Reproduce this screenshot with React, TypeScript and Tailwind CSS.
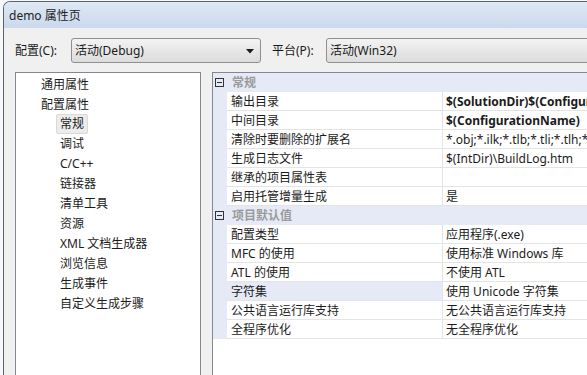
import React from "react";

type Prop = { name: string; value: string; bold?: boolean; selected?: boolean };

const general: Prop[] = [
  { name: "输出目录", value: "$(SolutionDir)$(ConfigurationName)", bold: true },
  { name: "中间目录", value: "$(ConfigurationName)", bold: true },
  { name: "清除时要删除的扩展名", value: "*.obj;*.ilk;*.tlb;*.tli;*.tlh;*.tmp;*.rsp;*.pgc;*.pgd" },
  { name: "生成日志文件", value: "$(IntDir)\\BuildLog.htm" },
  { name: "继承的项目属性表", value: "" },
  { name: "启用托管增量生成", value: "是" },
];

const defaults: Prop[] = [
  { name: "配置类型", value: "应用程序(.exe)" },
  { name: "MFC 的使用", value: "使用标准 Windows 库" },
  { name: "ATL 的使用", value: "不使用 ATL" },
  { name: "字符集", value: "使用 Unicode 字符集", selected: true },
  { name: "公共语言运行库支持", value: "无公共语言运行库支持" },
  { name: "全程序优化", value: "无全程序优化" },
];

const children = [
  "常规",
  "调试",
  "C/C++",
  "链接器",
  "清单工具",
  "资源",
  "XML 文档生成器",
  "浏览信息",
  "生成事件",
  "自定义生成步骤",
];

function Dropdown({ text, arrow, className }: { text: string; arrow?: boolean; className: string }) {
  return (
    <div
      className={`flex h-[25px] items-center rounded-[3px] border border-[#8e8f8f] bg-gradient-to-b from-[#f3f3f3] to-[#dcdcdc] pl-[3px] pr-[6px] ${className}`}
    >
      <span className="flex-1 whitespace-nowrap">{text}</span>
      {arrow ? (
        <svg width="8" height="5" viewBox="0 0 8 5" className="mt-[1px]">
          <path d="M0 0h8L4 4.5z" fill="#1a1a1a" />
        </svg>
      ) : null}
    </div>
  );
}

function Category({ title }: { title: string }) {
  return (
    <div className="flex h-[19px] items-center bg-[#e6eaf6]">
      <div className="ml-[2px] flex h-[9px] w-[9px] items-center justify-center border border-[#333]">
        <div className="h-px w-[5px] bg-[#333]" />
      </div>
      <span className="ml-[8px] font-bold text-[#9a9a9a]">{title}</span>
    </div>
  );
}

function Row({ p }: { p: Prop }) {
  return (
    <div className="flex h-[19px]">
      <div className="w-[14px] shrink-0 bg-[#e6eaf6]" />
      <div
        className={`flex w-[216px] shrink-0 items-center border-b border-r border-[#e4e4e4] pl-[4px] ${
          p.selected ? "bg-[#e6eaf6]" : "bg-white"
        }`}
      >
        {p.name}
      </div>
      <div
        className={`flex min-w-0 flex-1 items-center overflow-hidden whitespace-nowrap border-b border-[#e4e4e4] pl-[3px] ${
          p.bold ? "font-bold" : ""
        }`}
      >
        {p.value}
      </div>
    </div>
  );
}

export default function App() {
  return (
    <div className="h-[375px] w-[587px] overflow-hidden bg-[#f6f7f9] font-['Noto_Sans','Noto_Sans_CJK_SC',sans-serif] text-[12px] leading-[19px] text-[#1b1b1b]">
      <div className="ml-[3px] mt-[1px] flex h-[420px] w-[640px] flex-col rounded-tl-[7px] border-l border-t border-[#5c636b] bg-[#f0f0f0]">
        <div className="flex h-[26px] items-center rounded-tl-[6px] bg-gradient-to-b from-[#dfe8f4] to-[#cad9ec] pl-[5px] text-[#222]">
          demo 属性页
        </div>
        <div className="flex flex-col pl-[11px] pt-[10px]">
          <div className="flex items-center">
            <span className="w-[56px] shrink-0">配置(C):</span>
            <Dropdown text="活动(Debug)" arrow className="w-[190px]" />
            <span className="ml-[11px] w-[54px] shrink-0">平台(P):</span>
            <Dropdown text="活动(Win32)" className="w-[300px]" />
          </div>
          <div className="mt-[9px] flex">
            <div className="h-[320px] w-[186px] shrink-0 border border-[#828790] bg-white pt-[1px]">
              <div className="flex h-[20px] items-center pl-[25px]">通用属性</div>
              <div className="flex h-[20px] items-center pl-[25px]">配置属性</div>
              {children.map((c, i) => (
                <div key={c} className="flex h-[20px] items-center pl-[40px]">
                  <span
                    className={`rounded-[2px] border px-[3px] leading-[18px] ${
                      i === 0 ? "border-[#d9d9d9] bg-[#ececec]" : "border-transparent"
                    }`}
                  >
                    {c}
                  </span>
                </div>
              ))}
            </div>
            <div className="ml-[11px] h-[320px] flex-1 border-l border-t border-[#828790] bg-white">
              <Category title="常规" />
              {general.map((p) => (
                <Row key={p.name} p={p} />
              ))}
              <Category title="项目默认值" />
              {defaults.map((p) => (
                <Row key={p.name} p={p} />
              ))}
            </div>
          </div>
        </div>
      </div>
    </div>
  );
}
